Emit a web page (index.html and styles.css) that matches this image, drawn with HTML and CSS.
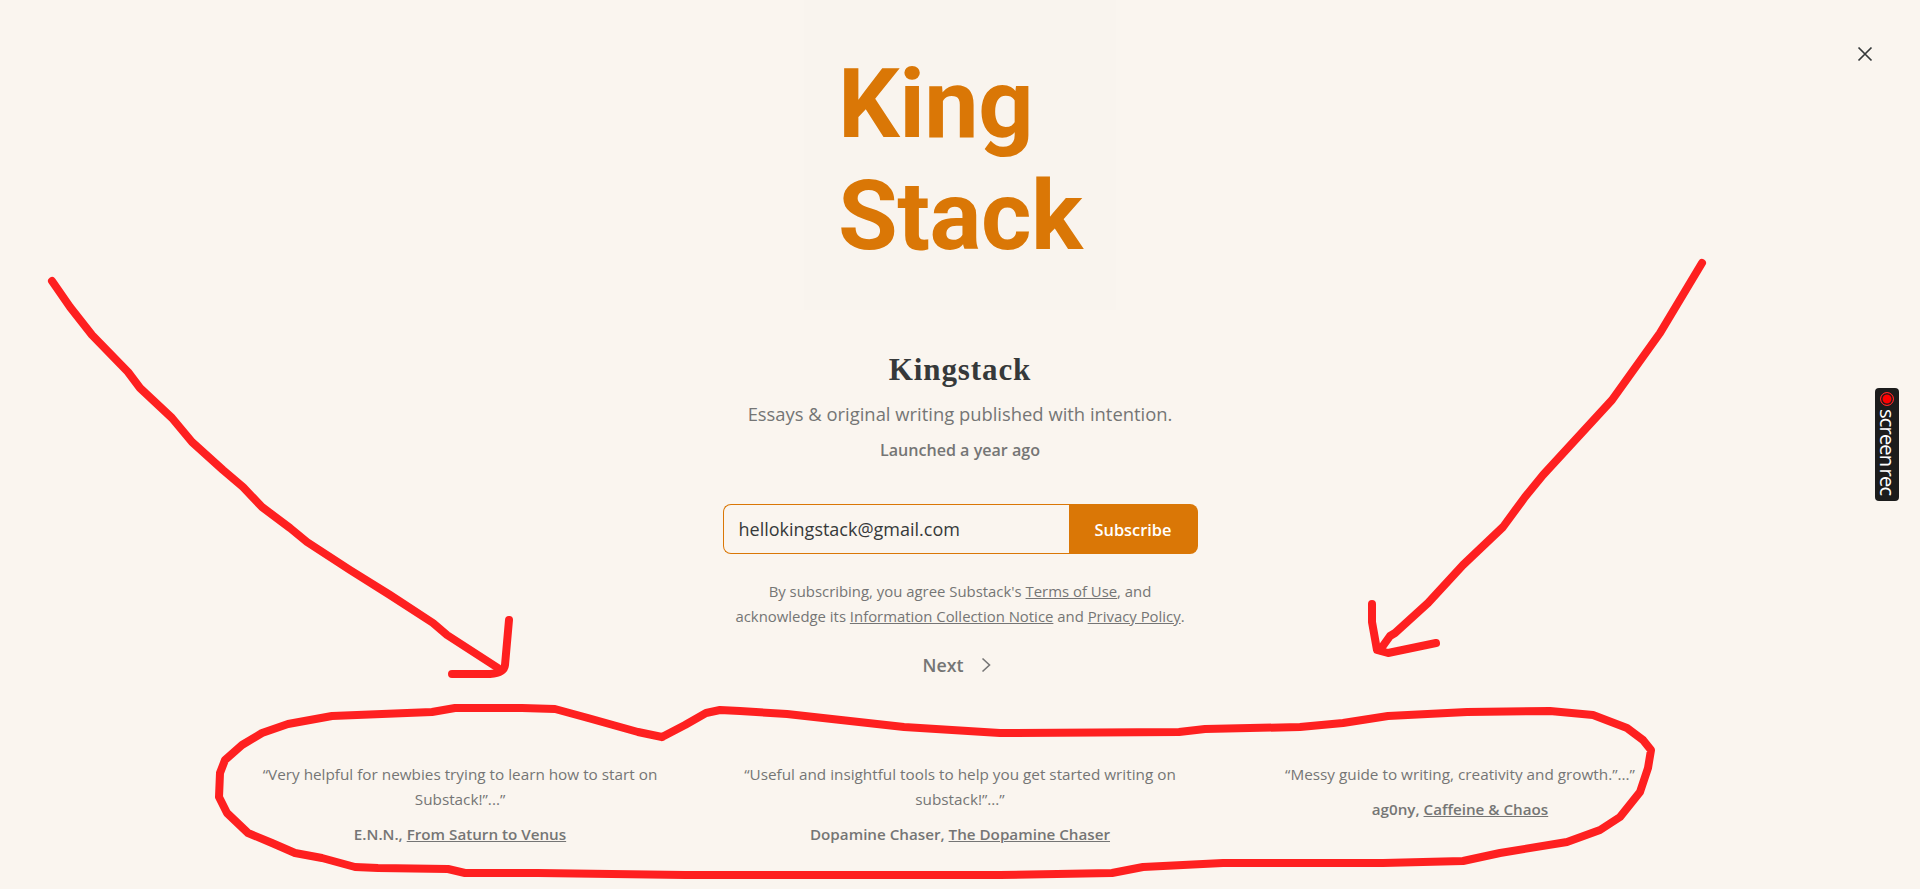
FILE: index.html
```html
<!DOCTYPE html>
<html lang="en">
<head>
<meta charset="utf-8">
<title>Kingstack</title>
<link rel="stylesheet" href="styles.css">
</head>
<body>
<main class="page">
  <section class="intro">
    <div class="logo" aria-label="King Stack logo">King<br>Stack</div>
    <h1 class="name">Kingstack</h1>
    <p class="tagline">Essays &amp; original writing published with intention.</p>
    <p class="launched">Launched a year ago</p>
    <form class="signup">
      <div class="email">hellokingstack@gmail.com</div>
      <button class="subscribe" type="button">Subscribe</button>
    </form>
    <p class="legal">By subscribing, you agree Substack's <a href="#">Terms of Use</a>, and<br>acknowledge its <a href="#">Information Collection Notice</a> and <a href="#">Privacy Policy</a>.</p>
    <div class="next">
      <span>Next</span>
      <svg class="chevron" viewBox="0 0 12 16" width="12" height="16"><path d="M2.5 1.5 9.5 8 2.5 14.5"/></svg>
    </div>
  </section>
  <section class="quotes">
    <figure class="quote">
      <blockquote>“Very helpful for newbies trying to learn how to start on Substack!”...”</blockquote>
      <figcaption>E.N.N., <a href="#">From Saturn to Venus</a></figcaption>
    </figure>
    <figure class="quote">
      <blockquote>“Useful and insightful tools to help you get started writing on substack!”...”</blockquote>
      <figcaption>Dopamine Chaser, <a href="#">The Dopamine Chaser</a></figcaption>
    </figure>
    <figure class="quote">
      <blockquote>“Messy guide to writing, creativity and growth.”...”</blockquote>
      <figcaption>ag0ny, <a href="#">Caffeine &amp; Chaos</a></figcaption>
    </figure>
  </section>
</main>

<button class="close" type="button" aria-label="Close">
  <svg viewBox="0 0 16 16" width="16" height="16"><path d="M1.5 1.5 14.5 14.5M14.5 1.5 1.5 14.5"/></svg>
</button>

<aside class="recorder">
  <span class="rec-dot"></span>
  <span class="rec-label">screen rec</span>
</aside>

<svg class="scribbles" viewBox="0 0 1920 889" width="1920" height="889" aria-hidden="true">
  <path class="arrow" d="M52 281 70 307 92 335 128 372 140 388 172 418 192 442 223 470 243 487 262 507 290 528 307 542 350 570 390 595 433 623 447 635 498 668"/>
  <path class="arrow" d="M509 620 505 665Q504 673 490 674L452 674"/>
  <path class="arrow" d="M1702 263 1690 283 1660 333 1612 400 1543 475 1525 497 1503 527 1463 565 1428 603 1395 633 1390 636 1380 650"/>
  <path class="arrow" d="M1372 604 1372 622 1377 650 1388 653 1436 643"/>
  <path class="loop" d="M662 737 638 732 588 718 555 709 522 708 455 708 432 712 332 716 288 724 262 733 242 745 225 760 220 773 219 797 227 813 248 833 272 843 295 853 322 858 355 867 378 868 448 869 465 873 538 873 685 875 787 875 1000 875 1112 873 1143 867 1223 863 1300 863 1383 863 1463 861 1500 853 1567 842 1600 830 1620 817 1640 792 1648 768 1651 750 1643 740 1627 728 1593 715 1550 711 1467 712 1388 716 1343 723 1300 727 1205 729 1179 732 1000 733 904 727 787 714 740 711 720 710 706 713 685 725 662 737"/>
</svg>
</body>
</html>
```
FILE: styles.css
```css
* { box-sizing: border-box; }

html, body { margin: 0; height: 100%; }

body {
  background: #faf5ef;
  color: #757575;
  font-family: "Open Sans", "Noto Sans", sans-serif;
  overflow: hidden;
}

a { color: inherit; text-decoration: underline; }

.page {
  display: flex;
  flex-direction: column;
  align-items: center;
  height: 889px;
}

.intro {
  display: flex;
  flex-direction: column;
  align-items: center;
  width: 500px;
}

.logo {
  width: 312px;
  height: 310px;
  padding: 48px 0 0 34px;
  background: #f9f4ee;
  color: #da7706;
  font-family: Roboto, sans-serif;
  font-weight: 700;
  font-size: 97px;
  line-height: 112px;
  letter-spacing: -0.5px;
}

.name {
  margin: 40px 0 0;
  font-family: "Liberation Serif", serif;
  font-weight: 700;
  font-size: 31px;
  line-height: 40px;
  letter-spacing: 0.9px;
  color: #36393a;
}

.tagline {
  margin: 11px 0 0;
  font-size: 18.4px;
  line-height: 26px;
}

.launched {
  margin: 11px 0 0;
  font-size: 16.1px;
  line-height: 24px;
  font-weight: 600;
}

.signup {
  display: flex;
  width: 475px;
  height: 50px;
  margin-top: 42px;
}

.email {
  flex: 1;
  display: flex;
  align-items: center;
  padding-left: 15px;
  border: 1px solid #da7706;
  border-right: 0;
  border-radius: 8px 0 0 8px;
  color: #36393a;
  font-size: 18px;
}

.subscribe {
  width: 129px;
  border: 0;
  border-radius: 0 8px 8px 0;
  background: #da7706;
  color: #fff;
  font: 600 16.4px "Open Sans", sans-serif;
}

.legal {
  margin: 25px 0 0;
  text-align: center;
  font-size: 14.9px;
  line-height: 25px;
}

.next {
  display: flex;
  align-items: center;
  gap: 16px;
  margin-top: 22px;
  padding-right: 6px;
  height: 28px;
  font-size: 17.8px;
  font-weight: 600;
}

.chevron path {
  fill: none;
  stroke: #757575;
  stroke-width: 1.6;
}

.quotes {
  display: grid;
  grid-template-columns: repeat(3, 450px);
  column-gap: 50px;
  margin-top: 83px;
}

.quote { margin: 0; text-align: center; }

.quote blockquote {
  margin: 0;
  font-size: 15.3px;
  line-height: 25px;
}

.quote figcaption {
  margin-top: 10px;
  font-size: 15.2px;
  line-height: 25px;
  font-weight: 600;
}

.close {
  position: absolute;
  top: 46px;
  right: 47px;
  display: flex;
  padding: 0;
  border: 0;
  background: none;
}

.close path {
  fill: none;
  stroke: #36393a;
  stroke-width: 1.7;
}

.recorder {
  position: absolute;
  top: 388px;
  left: 1875px;
  display: flex;
  flex-direction: column;
  align-items: center;
  width: 24px;
  height: 113px;
  padding-top: 4px;
  border-radius: 4px;
  background: #1c1c1c;
}

.rec-dot {
  flex: none;
  width: 14px;
  height: 14px;
  border: 1px solid #ff2a2a;
  border-radius: 50%;
  background: #f00;
  box-shadow: inset 0 0 0 1.5px #1c1c1c;
}

.rec-label {
  margin-top: 3px;
  writing-mode: vertical-rl;
  white-space: nowrap;
  color: #fff;
  font-size: 20px;
  line-height: 22px;
  letter-spacing: -0.8px;
  word-spacing: -2px;
}

.scribbles {
  position: absolute;
  top: 0;
  left: 0;
  pointer-events: none;
}

.arrow, .loop {
  fill: none;
  stroke: #fe2020;
  stroke-linecap: round;
  stroke-linejoin: round;
}

.arrow { stroke-width: 8; }
.loop { stroke-width: 8; }
```
